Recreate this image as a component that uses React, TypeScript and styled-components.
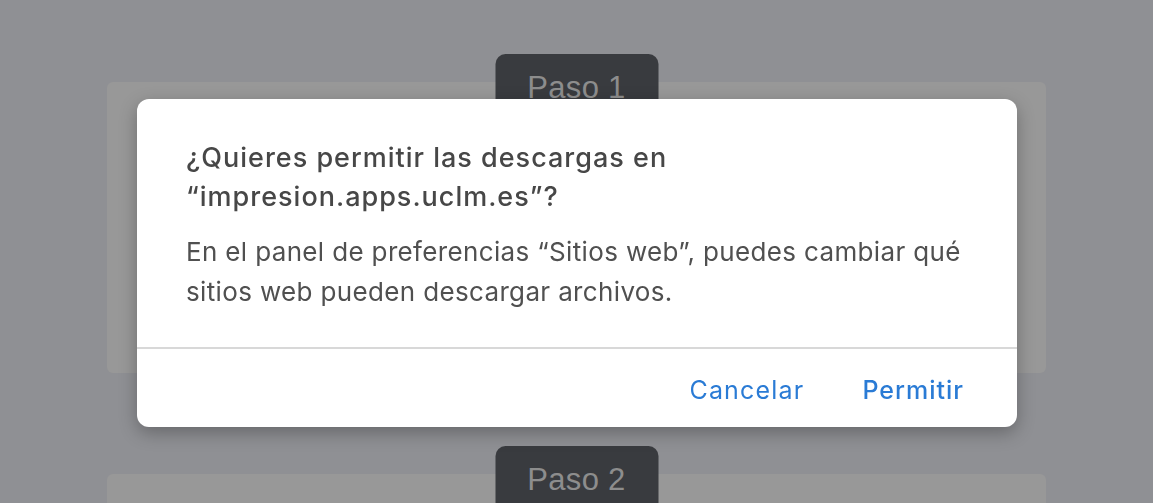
import React from "react";
import styled, { createGlobalStyle } from "styled-components";

const Global = createGlobalStyle`
  html, body { margin: 0; padding: 0; }
  body {
    background: #8f9094;
    font-family: Inter, "Liberation Sans", Arial, sans-serif;
    width: 1153px;
    height: 503px;
    overflow: hidden;
  }
`;

const Page = styled.div`
  display: flex;
  flex-direction: column;
  align-items: center;
  gap: 101px;
  padding-top: 82px;
`;

const Panel = styled.section<{ $h: number }>`
  position: relative;
  width: 939px;
  height: ${(p) => p.$h}px;
  background: #989898;
  border-radius: 6px;
`;

const Tab = styled.div`
  position: absolute;
  top: -28px;
  left: 50%;
  transform: translateX(-50%);
  width: 163px;
  height: 66px;
  box-sizing: border-box;
  border-radius: 10px;
  background: #393b3f;
  color: #8d8d8d;
  font-family: "Liberation Sans", Arial, sans-serif;
  font-size: 31px;
  letter-spacing: 0.3px;
  display: flex;
  justify-content: center;
  padding-top: 16px;
`;

const Dialog = styled.div`
  position: fixed;
  top: 99px;
  left: 137px;
  width: 880px;
  height: 328px;
  background: #ffffff;
  border-radius: 12px;
  box-shadow: 0 6px 18px rgba(0, 0, 0, 0.28);
  display: flex;
  flex-direction: column;
  overflow: hidden;
`;

const Body = styled.div`
  flex: 1;
  padding: 39px 49px 0 49px;
`;

const Title = styled.h2`
  margin: 0 0 16px 0;
  font-size: 27px;
  font-weight: 500;
  letter-spacing: 1px;
  line-height: 39px;
  color: #474747;
`;

const Message = styled.p`
  margin: 0;
  font-size: 26px;
  letter-spacing: 0.35px;
  line-height: 40px;
  color: #505050;
`;

const Footer = styled.div`
  height: 80px;
  box-sizing: border-box;
  border-top: 2px solid #d8d8d8;
  display: flex;
  justify-content: flex-end;
  align-items: center;
  gap: 58px;
  padding: 4px 53px 0 0;
`;

const Action = styled.button<{ $strong?: boolean }>`
  border: none;
  background: none;
  padding: 0;
  font-family: inherit;
  font-size: 25px;
  font-weight: ${(p) => (p.$strong ? 500 : 400)};
  letter-spacing: ${(p) => (p.$strong ? 1 : 1.2)}px;
  color: #2a7bd5;
  cursor: pointer;
`;

export default function App() {
  return (
    <>
      <Global />
      <Page>
        <Panel $h={291}>
          <Tab>Paso 1</Tab>
        </Panel>
        <Panel $h={120}>
          <Tab>Paso 2</Tab>
        </Panel>
      </Page>
      <Dialog>
        <Body>
          <Title>
            ¿Quieres permitir las descargas en
            <br />
            “impresion.apps.uclm.es”?
          </Title>
          <Message>
            En el panel de preferencias “Sitios web”, puedes cambiar qué
            <br />
            sitios web pueden descargar archivos.
          </Message>
        </Body>
        <Footer>
          <Action>Cancelar</Action>
          <Action $strong>Permitir</Action>
        </Footer>
      </Dialog>
    </>
  );
}
